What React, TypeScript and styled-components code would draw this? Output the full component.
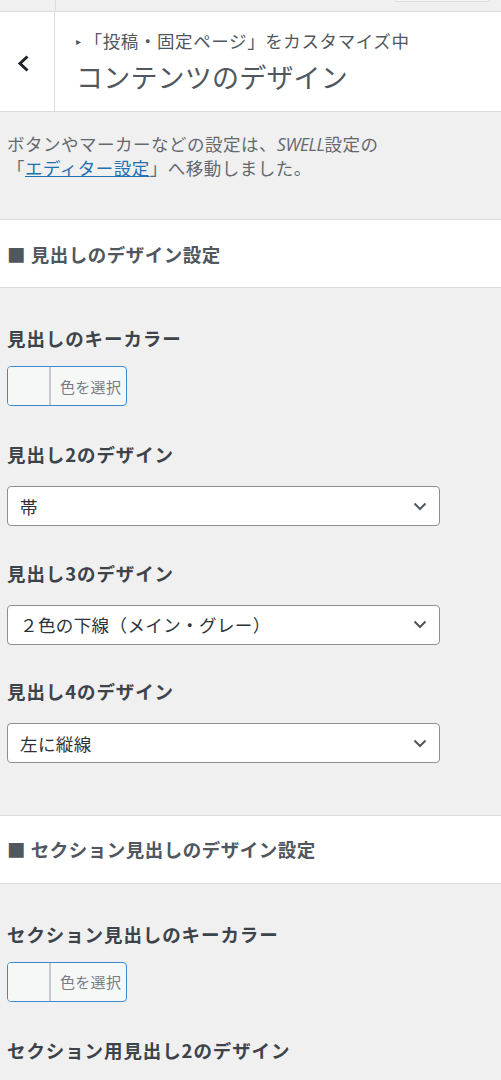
import React from 'react';
import styled, { createGlobalStyle } from 'styled-components';

const GlobalStyle = createGlobalStyle`
  html, body {
    margin: 0;
    padding: 0;
    background: #f0f0f1;
  }
  body {
    font-family: "Noto Sans CJK JP", "Noto Sans", "Liberation Sans", sans-serif;
    color: #50575e;
    overflow: hidden;
  }
`;

const Panel = styled.div`
  width: 501px;
  height: 1080px;
  overflow: hidden;
  background: #f0f0f1;
`;

const TopBar = styled.div`
  height: 11px;
  display: flex;
  align-items: flex-end;
  justify-content: flex-end;
  border-bottom: 1px solid #dcdcde;
  overflow: hidden;
  position: relative;
`;

const TopDivider = styled.div`
  position: absolute;
  left: 55px;
  top: 0;
  bottom: 0;
  width: 1px;
  background: #dcdcde;
`;

const PublishButton = styled.div`
  width: 94px;
  height: 30px;
  margin: 0 11px 9px 0;
  border: 1px solid #dcdcde;
  border-radius: 3px;
  background: #f6f7f7;
`;

const TitleBar = styled.div`
  display: flex;
  height: 99px;
  background: #fff;
  border-bottom: 1px solid #dcdcde;
`;

const BackButton = styled.div`
  width: 55px;
  border-right: 1px solid #dcdcde;
  display: flex;
  align-items: center;
  justify-content: center;
  padding: 3px 7px 0 0;
  box-sizing: border-box;
  color: #1d2327;
`;

const TitleText = styled.div`
  display: flex;
  flex-direction: column;
  padding: 17px 0 0 21px;
  gap: 6px;
`;

const Breadcrumb = styled.div`
  font-size: 17.5px;
  line-height: 24px;
  color: #50575e;
  white-space: nowrap;
  letter-spacing: 0.6px;
`;

const Caret = styled.span`
  font-size: 10px;
  margin-right: 3px;
  vertical-align: 3px;
`;

const PageTitle = styled.h1`
  margin: 0;
  font-size: 27px;
  font-weight: 400;
  line-height: 36px;
  color: #50575e;
  white-space: nowrap;
  letter-spacing: 0.2px;
`;

const Notice = styled.p`
  margin: 0;
  padding: 20px 7px 40px;
  font-size: 17.5px;
  line-height: 23px;
  color: #646970;
  letter-spacing: 0.5px;

  em {
    font-family: "Open Sans", "Liberation Sans", sans-serif;
    font-style: italic;
    letter-spacing: -0.4px;
  }

  a {
    color: #2271b1;
    text-decoration: underline;
  }
`;

const SectionHead = styled.h3`
  margin: 0;
  height: 67px;
  display: flex;
  align-items: center;
  padding: 0 7px;
  background: #fff;
  border-top: 1px solid #dcdcde;
  border-bottom: 1px solid #dcdcde;
  font-size: 18.5px;
  font-weight: 700;
  color: #50575e;
  white-space: nowrap;
  letter-spacing: 0.5px;
`;

const ControlList = styled.div<{ $bottom: number }>`
  padding: 38px 7px ${(p) => p.$bottom}px;
`;

const Control = styled.div<{ $gap: number }>`
  margin-bottom: ${(p) => p.$gap}px;
`;

const Label = styled.div<{ $space: number }>`
  font-size: 18.5px;
  font-weight: 700;
  line-height: 24px;
  color: #3c434a;
  margin-bottom: ${(p) => p.$space}px;
  white-space: nowrap;
  letter-spacing: 0.9px;
`;

const ColorButton = styled.div`
  width: 118px;
  height: 38px;
  display: flex;
  border: 1.5px solid #3a8ad0;
  border-radius: 4px;
  background: #f6f7f7;
  overflow: hidden;
`;

const Swatch = styled.div`
  width: 41px;
  border-right: 2px solid #c9cacd;
  background: #f6f7f7;
`;

const SwatchText = styled.div`
  flex: 1;
  display: flex;
  align-items: center;
  padding-left: 9px;
  font-size: 15px;
  color: #787c82;
  letter-spacing: 0.3px;
`;

const Select = styled.div`
  width: 431px;
  height: 38px;
  display: flex;
  align-items: center;
  justify-content: space-between;
  box-sizing: content-box;
  border: 1px solid #8c8f94;
  border-radius: 4px;
  background: #fff;
  color: #2c3338;
`;

const SelectValue = styled.span`
  font-size: 17.5px;
  padding-left: 12px;
  white-space: nowrap;
  letter-spacing: 0.4px;
`;

const Chevron = styled.span`
  display: flex;
  padding-right: 12px;
  color: #50575e;
`;

const ColorControl = ({ label }: { label: string }) => (
  <Control $gap={36}>
    <Label $space={16}>{label}</Label>
    <ColorButton>
      <Swatch />
      <SwatchText>色を選択</SwatchText>
    </ColorButton>
  </Control>
);

const SelectControl = ({ label, value }: { label: string; value: string }) => (
  <Control $gap={34.5}>
    <Label $space={20}>{label}</Label>
    <Select>
      <SelectValue>{value}</SelectValue>
      <Chevron>
        <svg width="14" height="9" viewBox="0 0 14 9" fill="none">
          <polyline points="1.5,1.5 7,7 12.5,1.5" stroke="currentColor" strokeWidth="2" />
        </svg>
      </Chevron>
    </Select>
  </Control>
);

export default function App() {
  return (
    <Panel>
      <GlobalStyle />
      <TopBar>
        <TopDivider />
        <PublishButton />
      </TopBar>
      <TitleBar>
        <BackButton>
          <svg width="13" height="17" viewBox="0 0 13 17" fill="none">
            <polyline points="10.5,1.5 3,8.5 10.5,15.5" stroke="currentColor" strokeWidth="3" />
          </svg>
        </BackButton>
        <TitleText>
          <Breadcrumb>
            <Caret>▸</Caret>「投稿・固定ページ」をカスタマイズ中
          </Breadcrumb>
          <PageTitle>コンテンツのデザイン</PageTitle>
        </TitleText>
      </TitleBar>
      <Notice>
        ボタンやマーカーなどの設定は、<em>SWELL</em>設定の
        <br />
        「<a href="#">エディター設定</a>」へ移動しました。
      </Notice>
      <SectionHead>■ 見出しのデザイン設定</SectionHead>
      <ControlList $bottom={17}>
        <ColorControl label="見出しのキーカラー" />
        <SelectControl label="見出し2のデザイン" value="帯" />
        <SelectControl label="見出し3のデザイン" value="２色の下線（メイン・グレー）" />
        <SelectControl label="見出し4のデザイン" value="左に縦線" />
      </ControlList>
      <SectionHead>■ セクション見出しのデザイン設定</SectionHead>
      <ControlList $bottom={0}>
        <ColorControl label="セクション見出しのキーカラー" />
        <Label $space={0}>セクション用見出し2のデザイン</Label>
      </ControlList>
    </Panel>
  );
}
